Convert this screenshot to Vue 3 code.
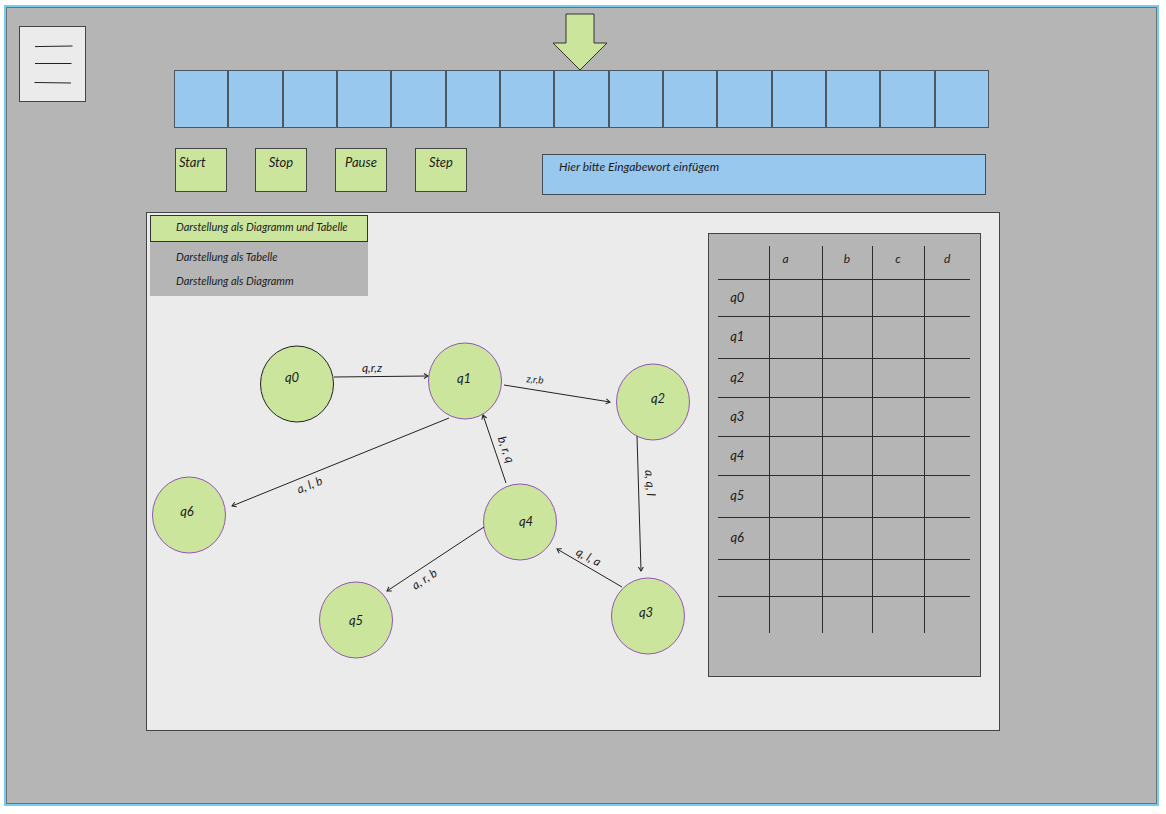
<script setup>
import { ref } from 'vue'

const cells = 15
const word = ref('')
const views = ['Darstellung als Tabelle', 'Darstellung als Diagramm']
const columns = ['a', 'b', 'c', 'd']
const rows = [
  { name: 'q0', size: 'low' },
  { name: 'q1', size: 'high' },
  { name: 'q2', size: 'mid' },
  { name: 'q3', size: 'mid' },
  { name: 'q4', size: 'mid' },
  { name: 'q5', size: 'high' },
  { name: 'q6', size: 'high' },
  { name: '', size: 'low' },
  { name: '', size: 'low' }
]

const nodes = [
  { name: 'q0', x: 150, y: 88, tx: 145, ty: 82, start: true },
  { name: 'q1', x: 318, y: 85, tx: 317, ty: 83 },
  { name: 'q2', x: 506, y: 106, tx: 511, ty: 103 },
  { name: 'q3', x: 501, y: 320, tx: 499, ty: 317 },
  { name: 'q4', x: 373, y: 226, tx: 379, ty: 226 },
  { name: 'q5', x: 209, y: 324, tx: 209, ty: 325 },
  { name: 'q6', x: 42, y: 219, tx: 40, ty: 216 }
]

const edges = [
  { from: [187, 81], to: [281, 80], label: 'q,r,z', at: [225, 73], turn: 0 },
  { from: [357, 89], to: [463, 106], label: 'z,r,b', at: [388, 84], turn: 5, small: true },
  { from: [490, 140], to: [494, 275], label: 'a, q, l', at: [502, 187], turn: 86 },
  { from: [475, 291], to: [410, 253], label: 'q, l, a', at: [441, 262], turn: 28 },
  { from: [359, 187], to: [336, 119], label: 'b, r, q', at: [358, 154], turn: 70 },
  { from: [302, 122], to: [85, 210], label: 'a, l, b', at: [163, 190], turn: -22 },
  { from: [337, 231], to: [240, 295], label: 'a, r, b', at: [278, 284], turn: -33 }
]
</script>

<template>
  <main class="frame">
    <button class="menu" type="button" aria-label="Menü">
      <svg width="65" height="74" viewBox="0 0 65 74" aria-hidden="true">
        <path d="M15 19.6L52.500 19M15 36.500H51.500M14.500 55.500L51 56" />
      </svg>
    </button>

    <div class="stage">
      <svg class="head" width="56" height="58" viewBox="0 0 56 58" aria-hidden="true">
        <path d="M14 1H42V30H55L28 57L1 30H14Z" />
      </svg>

      <div class="tape">
        <div v-for="n in cells" :key="n" class="cell"></div>
      </div>

      <div class="controls">
        <button class="action first" type="button">Start</button>
        <button class="action" type="button">Stop</button>
        <button class="action" type="button">Pause</button>
        <button class="action" type="button">Step</button>
        <input
          v-model="word"
          class="word"
          type="text"
          aria-label="Eingabewort"
          placeholder="Hier bitte Eingabewort einfügem"
        />
      </div>

      <section class="panel">
        <div class="drawing">
          <div class="views">
            <button class="view active" type="button">Darstellung als Diagramm und Tabelle</button>
            <div class="others">
              <button v-for="view in views" :key="view" class="view" type="button">{{ view }}</button>
            </div>
          </div>

          <svg class="diagram" viewBox="0 0 561 370">
            <defs>
              <marker id="tip" viewBox="0 0 8 8" refX="6" refY="4" markerWidth="8" markerHeight="8" orient="auto">
                <path d="M2 1.500L6 4L2 6.500" />
              </marker>
            </defs>
            <g v-for="node in nodes" :key="node.name">
              <ellipse :class="{ start: node.start }" :cx="node.x" :cy="node.y" rx="36.5" ry="38" />
              <text class="name" :x="node.tx" :y="node.ty + 4">{{ node.name }}</text>
            </g>
            <g v-for="edge in edges" :key="edge.label">
              <line
                :x1="edge.from[0]"
                :y1="edge.from[1]"
                :x2="edge.to[0]"
                :y2="edge.to[1]"
                marker-end="url(#tip)"
              />
              <text
                :class="{ small: edge.small }"
                :transform="`translate(${edge.at[0]} ${edge.at[1]}) rotate(${edge.turn})`"
                y="3"
              >{{ edge.label }}</text>
            </g>
          </svg>
        </div>

        <div class="sheet">
          <table>
            <thead>
              <tr>
                <td class="state"></td>
                <th v-for="column in columns" :key="column" :class="column" scope="col">{{ column }}</th>
              </tr>
            </thead>
            <tbody>
              <tr v-for="(row, i) in rows" :key="i" :class="row.size">
                <th class="state" scope="row">{{ row.name }}</th>
                <td v-for="column in columns" :key="column"></td>
              </tr>
            </tbody>
          </table>
        </div>
      </section>
    </div>
  </main>
</template>

<style>
body {
  margin: 0;
  background: #fff;
}
</style>

<style scoped>
.frame {
  display: grid;
  grid-template-columns: 140px minmax(0, 1fr) 157px;
  align-items: start;
  margin: 5px 7px 8px 4px;
  padding-bottom: 73px;
  border: 2px solid #78cdee;
  box-shadow: inset 0 0 0 1px #6c7375;
  background: #b5b5b5;
  color: #1c1c1c;
  font-family: Lato, "Open Sans", sans-serif;
  font-size: 12px;
  font-style: italic;
}

button,
input {
  box-sizing: border-box;
  margin: 0;
  border-radius: 0;
  color: inherit;
  font: inherit;
}

.menu {
  width: 67px;
  height: 76px;
  margin: 19px 0 0 13px;
  padding: 0;
  border: 1px solid #444;
  background: #ebebeb;
}

.menu svg {
  display: block;
}

.menu path {
  fill: none;
  stroke: #222;
}

.stage {
  display: flex;
  flex-direction: column;
  padding-top: 6px;
}

.head {
  align-self: center;
  margin: 0 0 -1px 14px;
}

.head path {
  fill: #cbe59c;
  stroke: #333;
}

.tape {
  display: grid;
  grid-template-columns: repeat(15, minmax(0, 1fr));
  margin: 0 11px 0 28px;
}

.cell {
  height: 56px;
  border: 1px solid #4c5760;
  background: #99c8ef;
}

.controls {
  display: flex;
  align-items: flex-start;
  gap: 28px;
  margin: 20px 14px 17px 29px;
}

.action {
  flex: none;
  width: 52px;
  height: 44px;
  padding: 0 3px 17px;
  border: 1px solid #444;
  background: #cbe59c;
  font-size: 13px;
}

.first {
  text-align: left;
}

.word {
  flex: 1;
  align-self: flex-end;
  min-width: 0;
  height: 41px;
  margin: 6px 0 0 47px;
  padding: 0 16px 16px;
  border: 1px solid #444c54;
  background: #99c8ef;
}

.word::placeholder {
  color: #1c1c1c;
  opacity: 1;
}

.panel {
  display: grid;
  grid-template-columns: minmax(0, 1fr) 273px;
  align-items: start;
  padding-right: 18px;
  border: 1px solid #444;
  background: #ebebeb;
}

.views {
  width: 218px;
  margin: 2px 0 0 3px;
  background: #b5b5b5;
  font-size: 11px;
}

.view {
  display: block;
  width: 100%;
  height: 24px;
  padding: 0 0 2px 26px;
  border: 0;
  background: transparent;
  text-align: left;
  white-space: nowrap;
}

.active {
  height: 27px;
  padding: 0 0 4px 25px;
  border: 1px solid #333;
  background: #cbe59c;
}

.others {
  padding: 3px 0;
}

.diagram {
  display: block;
  width: 100%;
}

.diagram ellipse {
  fill: #cbe59c;
  stroke: #9257b0;
}

.diagram .start {
  stroke: #222;
}

.diagram line,
.diagram marker path {
  fill: none;
  stroke: #222;
}

.diagram text {
  fill: #1c1c1c;
  font-size: 12px;
  text-anchor: middle;
}

.diagram .name {
  font-size: 13px;
}

.diagram .small {
  font-size: 10px;
}

.sheet {
  box-sizing: border-box;
  margin: 20px 0 53px;
  padding: 12px 10px 43px 9px;
  border: 1px solid #444;
  background: #b5b5b5;
}

table {
  width: 100%;
  border-collapse: collapse;
  table-layout: fixed;
}

th,
td {
  height: 39px;
  box-sizing: border-box;
  padding: 0;
  border-left: 1px solid #2c2c2c;
  border-top: 1px solid #2c2c2c;
  font-weight: 400;
}

thead th,
thead td {
  height: 33px;
  border-top: 0;
  padding-bottom: 8px;
}

.state {
  width: 51px;
  padding: 0 12px 2px 0;
  border-left: 0;
  font-size: 13px;
}

.a {
  width: 53px;
  padding-left: 13px;
  text-align: left;
}

.b {
  width: 50px;
}

.c {
  width: 52px;
}

.low > * {
  height: 37px;
}

.high > * {
  height: 42px;
}
</style>
